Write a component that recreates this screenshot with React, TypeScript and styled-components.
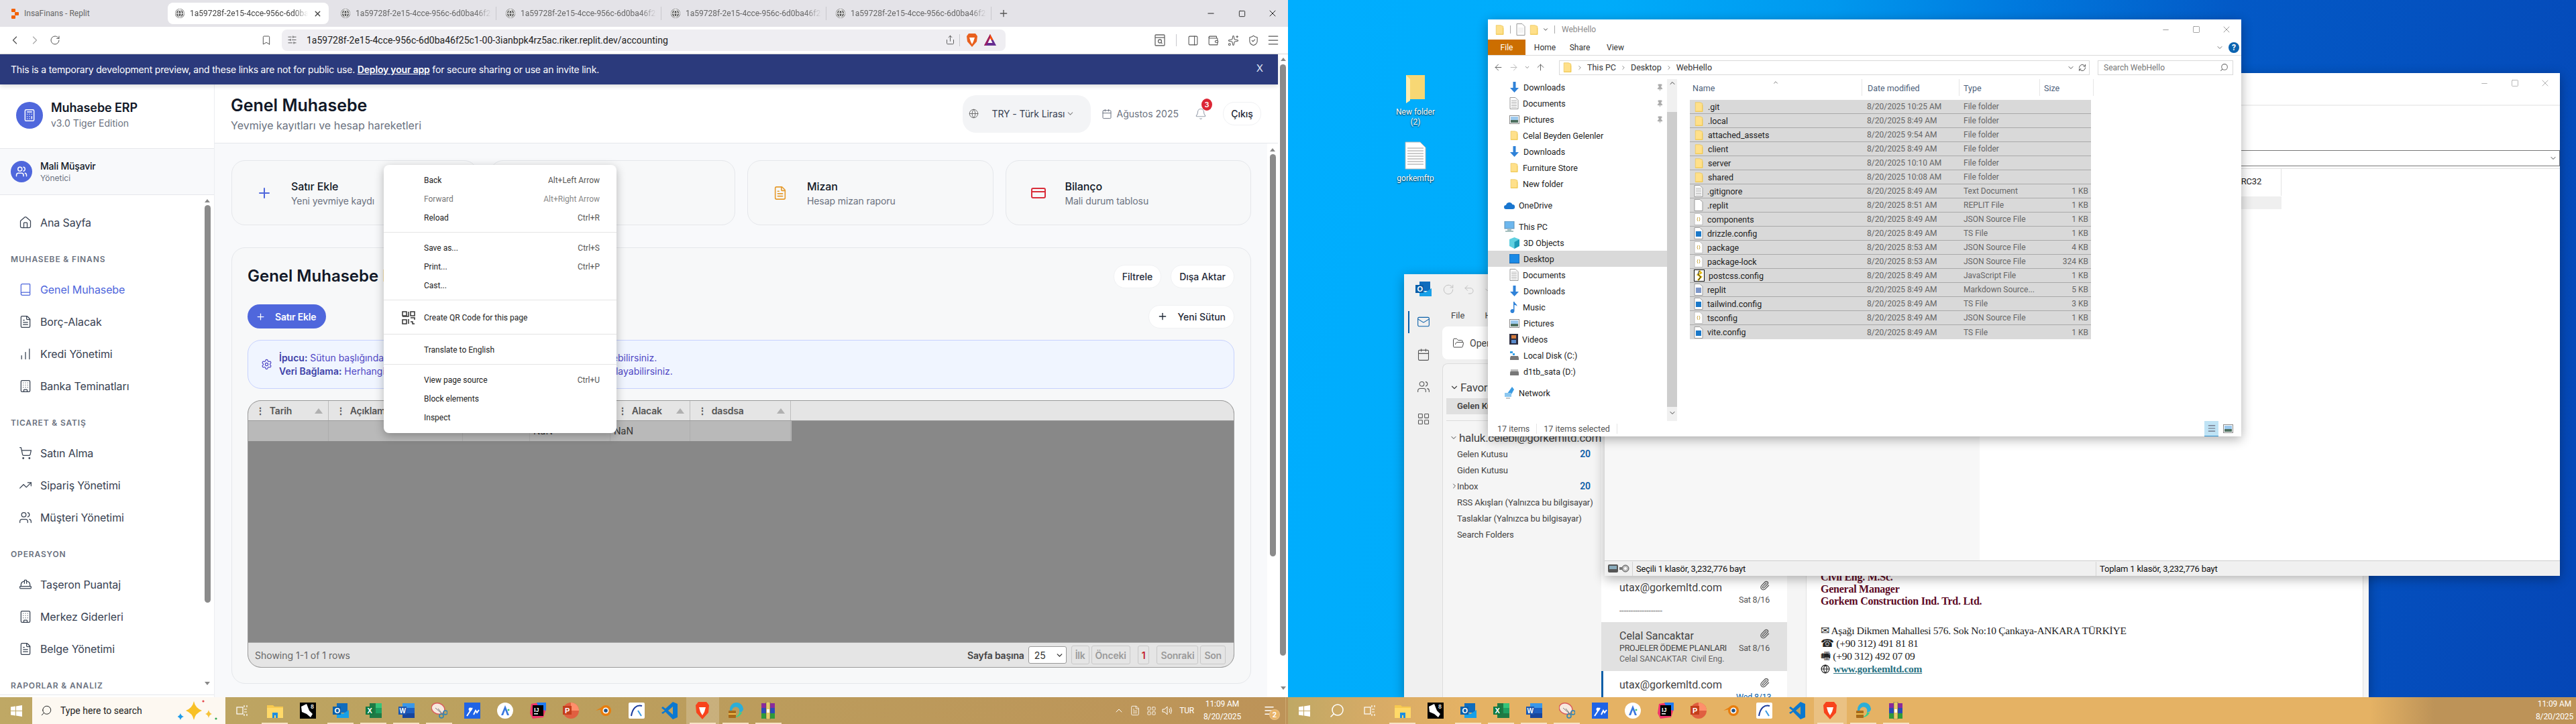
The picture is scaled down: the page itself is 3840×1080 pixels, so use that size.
import React from "react";
import styled, { createGlobalStyle } from "styled-components";
import {
  ArrowLeft, ArrowRight, ArrowUp, Bell, Book, Bookmark, Building, Calculator, Calendar, ChartNoAxesColumnIncreasing,
  ChevronDown, ChevronLeft, ChevronRight, ChevronUp, CreditCard, FileText, FolderOpen, Globe, HardHat, House,
  LayoutGrid, Mail, Menu, Minus, PanelRight, Paperclip, Plus, RefreshCw, RotateCw, Search, Settings, Share,
  ShieldCheck, ShoppingCart, SlidersHorizontal, Sparkles, Square, TrendingUp, Undo2, Users, Wallet, X, Pin,
} from "lucide-react";

const APP = `Inter, "Noto Sans", sans-serif`;
const WIN = `Roboto, "Noto Sans", sans-serif`;
const SERIF = `"Liberation Serif", serif`;

const Global = createGlobalStyle`
  html, body { margin: 0; padding: 0; width: 3840px; height: 1080px; overflow: hidden; background: #000; }
  * { box-sizing: border-box; }
  #root { width: 3840px; height: 1080px; }
`;

const Root = styled.div`display: grid; grid-template-columns: 1920px 1920px; width: 3840px; height: 1080px; overflow: hidden;`;
const Screen = styled.div`display: flex; flex-direction: column; height: 1080px; min-width: 0;`;

/* browser chrome */
const Browser = styled.div`display: flex; flex-direction: column; height: 1040px; background: #fff; overflow: hidden; position: relative;`;
const TabStrip = styled.div`display: flex; height: 40px; background: #e4e3e8; padding: 4px 0 0 4px; align-items: stretch; flex: none;`;
const Tab = styled.div<{ $active?: boolean; $sep?: boolean; $first?: boolean }>`
  width: ${p => (p.$active ? 240 : 246)}px; margin-right: ${p => (p.$active ? 7 : 0)}px; height: 32px; display: flex; align-items: center; gap: 8px;
  padding: 0 10px 0 ${p => (p.$first ? 13 : p.$active ? 11 : 11)}px; border-radius: 8px; background: ${p => (p.$active ? "#fff" : "transparent")};
  font: 12px ${WIN}; color: ${p => (p.$active ? "#444" : "#666")}; position: relative;
  ${p => p.$sep ? "&::after { content: ''; position: absolute; right: 3px; top: 6px; bottom: 6px; width: 1px; background: #c9c8cd; }" : ""}
`;
const TabLabel = styled.span<{ $fade?: boolean }>`
  flex: 1; white-space: nowrap; overflow: hidden; min-width: 0;
  ${p => p.$fade ? "mask-image: linear-gradient(90deg, #000 88%, transparent); -webkit-mask-image: linear-gradient(90deg, #000 88%, transparent);" : ""}
`;
const GlobeDot = styled.span`width: 14px; height: 14px; border-radius: 50%; background: #555; flex: none; display: grid; place-items: center; color: #fff;`;
const NewTab = styled.div`width: 30px; display: grid; place-items: center; color: #555; margin-top: -4px;`;
const WinControls = styled.div`margin-left: auto; display: flex; margin-top: -4px; color: #222;`;
const WinControl = styled.div`width: 46px; height: 40px; display: grid; place-items: center;`;

const Toolbar = styled.div`display: flex; height: 41px; padding: 0 7px; align-items: center; background: #fff; border-bottom: 1px solid #d9d9d9; flex: none;`;
const ToolSlot = styled.div<{ $dim?: boolean; $w?: number }>`width: ${p => p.$w ?? 30}px; height: 30px; display: grid; place-items: center; color: ${p => (p.$dim ? "#aaa" : "#555")}; flex: none;`;
const ToolGap = styled.div`width: 285px; flex: none;`;
const AddressBar = styled.div`width: 1079px; height: 32px; margin-left: 8px; margin-top: -1px; border-radius: 8px; background: #efeef2; display: flex; align-items: center; padding: 0 8px; flex: none;`;
const Url = styled.div`font: 14px ${WIN}; color: #222; margin-left: 14px; flex: 1; white-space: nowrap;`;
const BarSep = styled.div<{ $m?: number }>`width: 1px; height: 18px; background: #c8c8cc; margin: 0 ${p => p.$m ?? 6}px; flex: none;`;
const ToolRight = styled.div`margin-left: auto; display: flex; align-items: center;`;

/* replit page */
const PageRow = styled.div`flex: 1; display: flex; min-height: 0;`;
const Page = styled.div`flex: 1; display: flex; flex-direction: column; min-width: 0;`;
const Banner = styled.div`height: 45px; flex: none; background: #2b3a7c; color: #fff; font: 14px/45px ${APP}; padding: 0 16px; display: flex; justify-content: space-between; box-shadow: 0 3px 6px rgba(0,0,0,.12); position: relative; z-index: 2;`;
const BannerText = styled.div`letter-spacing: -0.18px; b { font-weight: 600; text-decoration: underline; }`;
const BannerClose = styled.div`font-size: 15px; margin-right: -1px; line-height: 41px; color: #dfe3f3; padding-right: 7px;`;
const ScrollTrack = styled.div<{ $w: number; $bg?: string }>`width: ${p => p.$w}px; flex: none; background: ${p => p.$bg || "#fff"}; display: flex; flex-direction: column; align-items: center;`;
const ScrollArrow = styled.div<{ $down?: boolean; $top?: number }>`
  width: 0; height: 0; border-left: 4px solid transparent; border-right: 4px solid transparent; flex: none;
  margin-top: ${p => p.$top ?? 5}px; ${p => (p.$down ? "border-top: 5px solid #888;" : "border-bottom: 5px solid #888;")}
`;
const ScrollThumb = styled.div<{ $h: number; $top: number }>`width: 9px; height: ${p => p.$h}px; margin-top: ${p => p.$top}px; border-radius: 5px; background: #8b8b8b; flex: none;`;

const AppBody = styled.div`flex: 1; display: grid; grid-template-columns: 320px 1fr; min-height: 0;`;
const Sidebar = styled.aside`display: flex; flex-direction: column; background: #fff; border-right: 1px solid #eceef1; font-family: ${APP}; min-height: 0;`;
const Brand = styled.div`height: 96px; flex: none; display: flex; align-items: center; gap: 12px; padding: 0 24px 4px; border-bottom: 1px solid #e5e7eb;`;
const BrandIcon = styled.div`width: 40px; height: 40px; border-radius: 50%; background: #4f67dc; display: grid; place-items: center; color: #fff; flex: none;`;
const BrandName = styled.div`font-size: 18px; line-height: 24px; font-weight: 600; color: #111827; letter-spacing: -0.1px;`;
const BrandSub = styled.div`font-size: 14px; line-height: 22px; color: #6b7280;`;
const UserRow = styled.div`height: 69px; flex: none; background: #f8f9fb; border-bottom: 1px solid #e5e7eb; display: flex; align-items: center; gap: 12px; padding: 0 16px;`;
const Avatar = styled.div`width: 32px; height: 32px; border-radius: 50%; background: #4f67dc; color: #fff; display: grid; place-items: center; flex: none;`;
const UserName = styled.div`font-size: 14px; line-height: 20px; font-weight: 500; color: #111827; letter-spacing: -0.2px;`;
const UserRole = styled.div`font-size: 12px; line-height: 16px; color: #6b7280;`;
const NavWrap = styled.div`flex: 1; display: flex; min-height: 0; overflow: hidden;`;
const Nav = styled.nav`flex: 1; padding: 17px 16px 0; overflow: hidden;`;
const NavLabel = styled.div`font-size: 12px; font-weight: 600; line-height: 22px; color: #6b7280; margin: 20px 0 10px; letter-spacing: 0.85px; white-space: nowrap;`;
const NavItem = styled.div<{ $active?: boolean }>`
  height: 48px; display: flex; align-items: center; gap: 12px; padding-left: 12px; font-size: 16px; letter-spacing: -0.1px;
  color: ${p => (p.$active ? "#4f67dc" : "#374151")};
`;
const SideEnd = styled.div`height: 4px; flex: none; background: #fff; border-top: 1px solid #e5e7eb;`;

const Main = styled.main`display: flex; flex-direction: column; min-width: 0; font-family: ${APP}; background: #f8f9fb;`;
const Header = styled.header`height: 88px; flex: none; background: #fff; border-bottom: 1px solid #e5e7eb; display: flex; align-items: center; padding: 0 25px 0 24px;`;
const HeadTitle = styled.h1`margin: 0; font-size: 25px; line-height: 32px; font-weight: 600; color: #111827;`;
const HeadSub = styled.p`margin: 2px 0 0; font-size: 16px; line-height: 24px; color: #6b7280;`;
const HeadRight = styled.div`margin-left: auto; display: flex; align-items: center;`;
const Currency = styled.div`width: 191px; height: 56px; border-radius: 20px; background: #f3f4f6; display: flex; align-items: center; padding-left: 9px; color: #374151; font-size: 14px; letter-spacing: -0.1px; white-space: nowrap;`;
const CurrencyText = styled.span`margin-left: 20px;`;
const CurrencyCaret = styled.span`margin-left: 2px; color: #888; display: grid;`;
const DateBox = styled.div`display: flex; align-items: center; gap: 7px; margin-left: 16px; font-size: 14px; color: #6b7280; white-space: nowrap;`;
const BellBox = styled.div`position: relative; margin-left: 24px; color: #9ca3af; display: grid; place-items: center; width: 18px;`;
const Badge = styled.span`position: absolute; top: -14px; right: -8px; width: 16px; height: 18px; border-radius: 50%; background: #dc2635; color: #fff; font-size: 11px; font-weight: 600; display: grid; place-items: center;`;
const Logout = styled.div`margin-left: 24px; width: 57px; height: 35px; border-radius: 17px; background: #fff; border: 1px solid #f0f1f3; font-size: 14px; font-weight: 500; color: #1f2937; display: grid; place-items: center;`;

const ContentRow = styled.div`flex: 1; display: flex; min-height: 0;`;
const Content = styled.div`flex: 1; padding: 25px 24px 0 25px; min-width: 0; overflow: hidden;`;
const Cards = styled.div`display: grid; grid-template-columns: repeat(4, 1fr); gap: 18px;`;
const ActionCard = styled.div`height: 97px; border-radius: 20px; background: #f7f8f9; border: 1px solid #e5e7eb; display: flex; align-items: center; padding-left: 36px; gap: 28px;`;
const CardIcon = styled.div<{ $c: string }>`width: 24px; color: ${p => p.$c}; display: grid; place-items: center; flex: none;`;
const CardTitle = styled.div`font-size: 16px; line-height: 24px; font-weight: 500; color: #111827; letter-spacing: -0.1px;`;
const CardSub = styled.div`font-size: 14px; line-height: 20px; color: #6b7280; white-space: nowrap; letter-spacing: -0.1px;`;

const LedgerCard = styled.section`margin-top: 33px; height: 651px; background: #f7f8f9; border: 1px solid #e5e7eb; border-radius: 20px; padding: 24px 24px 0 23px;`;
const LedgerTop = styled.div`display: flex; align-items: center; justify-content: space-between; height: 36px;`;
const LedgerTitle = styled.h2`margin: 0; font-size: 24px; font-weight: 600; line-height: 32px; color: #111827; white-space: nowrap;`;
const BtnRow = styled.div`display: flex; gap: 14px;`;
const Ghost = styled.div`height: 35px; padding: 0 12px; border-radius: 17px; background: #fff; border: 1px solid #f0f1f3; font-size: 14px; font-weight: 500; color: #1f2937; display: flex; align-items: center; gap: 14px; white-space: nowrap;`;
const LedgerActions = styled.div`display: flex; align-items: center; justify-content: space-between; margin-top: 24px; height: 36px;`;
const Primary = styled.div`width: 117px; height: 36px; border-radius: 18px; background: #4f67dc; color: #fff; font-size: 14px; font-weight: 600; display: flex; align-items: center; padding-left: 12px; gap: 14px; letter-spacing: -0.2px;`;
const TipBox = styled.div`margin-top: 17px; height: 73px; border-radius: 20px; background: #f0f5ff; border: 1px solid #c7d2fe; display: flex; align-items: center; padding-left: 19px; gap: 10px; color: #4f46c5; font-size: 14px; line-height: 20px; white-space: nowrap;`;
const TipText = styled.div`b { font-weight: 600; color: #3c3fa8; }`;

const TableBox = styled.div`margin-top: 17px; height: 399px; border: 1px solid #9a9a9a; border-radius: 20px; overflow: hidden; display: flex; flex-direction: column; background: #888;`;
const THead = styled.div`height: 30px; background: #e5e5e5; display: flex; border-bottom: 1px solid #9a9a9a; flex: none;`;
const THCell = styled.div<{ $w: number }>`
  width: ${p => p.$w}px; border-right: 1px solid #bdbdbd; display: flex; align-items: center; padding: 0 8px 0 11px; gap: 7px;
  font-size: 14px; font-weight: 600; color: #555; overflow: hidden; white-space: nowrap; flex: none; letter-spacing: -0.2px;
`;
const Dots = styled.span`font-weight: 700; color: #555;`;
const SortMark = styled.span`margin-left: auto; width: 0; height: 0; border-left: 6px solid transparent; border-right: 6px solid transparent; border-bottom: 8px solid #b0b0b0; flex: none;`;
const TBody = styled.div`flex: 1; background: #888; min-height: 0;`;
const TRow = styled.div`height: 30px; display: flex; background: #b9b9b9; width: 810px;`;
const TCell = styled.div<{ $w: number }>`width: ${p => p.$w}px; border-right: 1px solid #adadad; font-size: 14px; color: #333; padding-left: 5px; line-height: 30px; flex: none;`;
const TFoot = styled.div`height: 37px; flex: none; background: #e5e5e5; border-top: 1px solid #a8a8a8; display: flex; align-items: center; padding: 0 12px 0 10px; font-size: 14px; color: #666;`;
const Pager = styled.div`margin-left: auto; display: flex; align-items: center; gap: 3px;`;
const PagerLabel = styled.span`font-weight: 600; color: #444; margin-right: 3px; letter-spacing: -0.2px;`;
const PageSelect = styled.div`width: 57px; height: 26px; background: #fff; border: 1px solid #999; border-radius: 3px; color: #333; display: flex; align-items: center; justify-content: space-between; padding: 0 3px 0 8px; margin-right: 4px;`;
const PageBtn = styled.div<{ $on?: boolean; $ml?: number }>`
  height: 28px; padding: 0 5px; border: 1px solid #c8c8c8; border-radius: 3px; font-weight: 600; letter-spacing: -0.2px;
  color: ${p => (p.$on ? "#c3202b" : "#9a9a9a")}; display: flex; align-items: center; margin-left: ${p => p.$ml ?? 0}px;
`;

/* context menu */
const ContextMenu = styled.div`
  position: absolute; left: 572px; top: 246px; width: 347px; height: 400px; background: #fff; border-radius: 8px; padding-top: 9px;
  box-shadow: 0 4px 14px rgba(0,0,0,.28); font: 12px/28px ${WIN}; color: #222; z-index: 5;
`;
const MenuItem = styled.div<{ $dim?: boolean; $tall?: boolean }>`
  height: ${p => (p.$tall ? 34 : 28)}px; display: flex; align-items: center; padding: 0 25px 0 60px; position: relative; color: ${p => (p.$dim ? "#777" : "#222")};
  span { margin-left: auto; color: ${p => (p.$dim ? "#888" : "#555")}; }
`;
const MenuRule = styled.div`height: 1px; background: #e4e4e4; margin: 7px 0 9px;`;
const QrSlot = styled.div`position: absolute; left: 27px; top: 7px;`;

/* taskbar */
const Taskbar = styled.div<{ $bg: string }>`height: 40px; flex: none; display: flex; align-items: stretch; background: ${p => p.$bg}; overflow: hidden;`;
const StartBtn = styled.div`width: 48px; display: grid; place-items: center; flex: none;`;
const SearchBox = styled.div`width: 288px; flex: none; background: #fdf8f1; display: flex; align-items: center; padding-left: 12px; gap: 12px; font: 14px ${WIN}; color: #222;`;
const Spark = styled.div`margin-left: auto; display: grid; padding-right: 9px;`;
const Slot = styled.div<{ $active?: boolean; $run?: boolean }>`
  width: 49.06px; flex: none; position: relative; display: grid; place-items: center;
  background: ${p => (p.$active ? "rgba(255,255,255,.2)" : "transparent")};
  ${p => p.$run ? "&::after { content: ''; position: absolute; left: 5px; right: 5px; bottom: 0; height: 2px; background: #f8e3c6; }" : ""}
`;
const Tray = styled.div`margin-left: auto; display: flex; align-items: center; color: #fff; font: 12px ${WIN}; flex: none;`;
const TrayIcon = styled.div`width: 24px; display: grid; place-items: center;`;
const TrayLang = styled.div`margin: 0 12px 0 6px; letter-spacing: -0.2px;`;
const Clock = styled.div<{ $mr?: number }>`text-align: center; line-height: 19px; width: 60px; letter-spacing: -0.1px; margin-right: ${p => p.$mr ?? 0}px;`;
const Notify = styled.div`position: relative; width: 48px; display: grid; place-items: center; height: 40px; margin-left: 16px;`;
const NotifyBadge = styled.span`position: absolute; left: 24px; top: 18px; width: 16px; height: 16px; border-radius: 50%; background: #e9b468; color: #fff; font-size: 11px; display: grid; place-items: center; font-weight: 600; border: 1px solid #fff3;`;
const EdgeLine = styled.div`width: 4px; height: 40px; border-left: 1px solid #cfa971;`;

/* desktop */
const Desktop = styled.div`height: 1040px; position: relative; overflow: hidden; background: linear-gradient(102deg, #00aeff 0%, #00acfa 22%, #0098ee 38%, #007bdf 50%, #0359c6 66%, #0546b6 100%);`;
const DeskIcon = styled.div<{ $x: number; $y: number }>`position: absolute; left: ${p => p.$x}px; top: ${p => p.$y}px; width: 76px; display: flex; flex-direction: column; align-items: center; gap: 6px; color: #fff; font: 12px/15px ${WIN}; text-align: center; text-shadow: 0 1px 2px rgba(0,0,0,.9);`;

const Win = styled.div<{ $x: number; $y: number; $w: number; $h: number; $z: number }>`
  position: absolute; left: ${p => p.$x}px; top: ${p => p.$y}px; width: ${p => p.$w}px; height: ${p => p.$h}px; z-index: ${p => p.$z};
  background: #fff; box-shadow: 0 4px 16px rgba(0,0,0,.32); display: flex; flex-direction: column; overflow: hidden; font: 12px ${WIN}; color: #222;
`;

/* explorer */
const ExTitle = styled.div`height: 30px; flex: none; display: flex; align-items: center; padding-left: 10px; gap: 5px; color: #999;`;
const ExSep = styled.div`width: 1px; height: 12px; background: #aaa; margin: 0 3px;`;
const ExName = styled.div`font-size: 12px; color: #8a8a8a; margin-left: 2px;`;
const ExControls = styled.div`margin-left: auto; display: flex; color: #666; margin-right: 0;`;
const ExControl = styled.div`width: 45px; height: 30px; display: grid; place-items: center;`;
const Ribbon = styled.div`height: 24px; flex: none; display: flex; align-items: stretch; border-bottom: 1px solid #dadada; color: #333;`;
const FileTab = styled.div`width: 56px; background: #cc6e00; color: #fff; display: grid; place-items: center;`;
const RibbonTab = styled.div<{ $w?: number }>`display: grid; place-items: center; width: ${p => p.$w ?? 58}px; font-size: 12px;`;
const RibbonEnd = styled.div`margin-left: auto; display: flex; align-items: center; gap: 7px; padding-right: 3px; color: #777;`;
const Help = styled.div`width: 16px; height: 16px; border-radius: 50%; background: #0a63b0; color: #fff; font-weight: 700; font-size: 12px; display: grid; place-items: center;`;
const AddrRow = styled.div`height: 35px; flex: none; display: flex; align-items: center; padding: 0 12px 0 8px; color: #555;`;
const AddrNav = styled.div`width: 98px; display: flex; align-items: center; gap: 8px; flex: none;`;
const AddrField = styled.div`width: 791px; height: 22px; border: 1px solid #d9d9d9; display: flex; align-items: center; padding-left: 4px; gap: 6px; flex: none; color: #333; font-size: 12.5px;`;
const Crumb = styled.span`color: #777; display: grid; place-items: center;`;
const AddrEnd = styled.div`margin-left: auto; display: flex; align-items: center; color: #555; gap: 5px; padding-right: 4px;`;
const SearchField = styled.div`width: 202px; height: 22px; margin-left: 12px; border: 1px solid #d9d9d9; display: flex; align-items: center; justify-content: space-between; padding: 0 6px 0 8px; color: #777; flex: none;`;
const ExBody = styled.div`flex: 1; display: flex; min-height: 0;`;
const ExNav = styled.div`width: 267px; flex: none; overflow: hidden;`;
const ExNavItem = styled.div<{ $top?: boolean; $sel?: boolean; $gap?: boolean }>`
  height: 24px; display: flex; align-items: center; gap: 6px; padding-left: ${p => (p.$top ? 24 : 32)}px; padding-right: 5px; position: relative;
  background: ${p => (p.$sel ? "#d9d9d9" : "transparent")}; margin-top: ${p => (p.$gap ? 8 : 0)}px; font-size: 12.5px; color: #222; white-space: nowrap;
`;
const PinBox = styled.span`margin-left: auto; color: #aaa; display: grid; place-items: center;`;
const ExTrack = styled.div`width: 15px; height: 510px; flex: none; background: #f0f0f0; display: flex; flex-direction: column; align-items: center; color: #444;`;
const ExThumb = styled.div`width: 15px; height: 440px; background: #cdcdcd; margin-top: 37px; margin-bottom: 3px; flex: none;`;
const ExList = styled.div`flex: 1; padding-left: 19px; min-width: 0;`;
const ListHead = styled.div`height: 25px; display: grid; grid-template-columns: 257px 145px 120px 80px; color: #4c607a; position: relative; margin-bottom: 6px;`;
const ListHCell = styled.div<{ $pl?: number }>`border-right: 1px solid #e5e5e5; padding: 6px 0 0 ${p => p.$pl ?? 4}px; font-size: 12.5px; position: relative; height: 25px;`;
const SortCaret = styled.div`position: absolute; left: 123px; top: 0; color: #666; display: grid;`;
const ListRow = styled.div`height: 21px; width: 598px; display: grid; grid-template-columns: 264px 144px 120px 66px; align-items: center; background: #d9d9d9; border-bottom: 1px solid #a9a9a9; color: #666; font-size: 12px; padding-right: 4px; &:last-child { border-bottom: 0; }`;
const NameCell = styled.div`display: flex; align-items: center; gap: 6px; padding-left: 6px; color: #222; font-size: 12.5px; white-space: nowrap;`;
const SizeCell = styled.div`text-align: right; padding-right: 0;`;
const ExStatus = styled.div`height: 23px; flex: none; display: flex; align-items: center; padding-left: 14px; color: #555; position: relative; font-size: 12.5px;`;
const StatusPart = styled.div`padding-right: 10px; margin-right: 10px; border-right: 1px solid #e5e5e5;`;
const ViewBtns = styled.div`position: absolute; right: 9px; bottom: 0; display: flex; align-items: flex-end; gap: 4px;`;
const ViewBtn = styled.div<{ $on?: boolean }>`width: 21px; height: 23px; background: ${p => (p.$on ? "#bfe3f5" : "transparent")}; border-bottom: ${p => (p.$on ? "1px solid #2a8fd0" : "0")}; display: grid; place-items: center;`;

/* archive window behind */
const ArTitle = styled.div`height: 49px; flex: none; border-bottom: 2px solid #efefef; display: flex; justify-content: flex-end; color: #888; padding-right: 0;`;
const ArSpace = styled.div`height: 66px; flex: none;`;
const ArCombo = styled.div`height: 24px; flex: none; border: 1px solid #777; display: flex; align-items: center; justify-content: flex-end; padding-right: 3px; color: #444;`;
const ArBody = styled.div`flex: 1; display: flex; min-height: 0; margin-top: 3px; border-top: 1px solid #e0e0e0;`;
const ArLeft = styled.div`width: 559px; background: #f7f7f7; flex: none;`;
const ArRight = styled.div`flex: 1; min-width: 0;`;
const ArHead = styled.div`height: 40px; width: 450px; border-right: 1px solid #e3e3e3; text-align: right; padding: 11px 29px 0 0; font-size: 13px; color: #222; letter-spacing: -0.2px;`;
const ArRow = styled.div`height: 19px; margin-top: 1px; width: 450px; background: #efefef;`;
const ArStatus = styled.div`height: 23px; flex: none; background: #f0f0f0; border-top: 1px solid #cfcfcf; display: flex; align-items: center; font-size: 13px; letter-spacing: -0.2px; color: #111; position: relative;`;
const ArStat = styled.div<{ $w: number }>`width: ${p => p.$w}px; flex: none; padding-left: 5px; height: 21px; line-height: 21px; border-left: 1px solid #d4d4d4; white-space: nowrap;`;
const ArIcons = styled.div`width: 41px; flex: none; display: flex; gap: 2px; padding-left: 5px; align-items: center;`;

/* outlook behind */
const OlRail = styled.div`width: 57px; flex: none; background: #f0f0f0; display: flex; flex-direction: column; align-items: center; color: #555; position: relative;`;
const RailBtn = styled.div<{ $on?: boolean; $h: number; $mt?: number }>`height: ${p => p.$h}px; margin-top: ${p => p.$mt ?? 0}px; display: grid; place-items: center; flex: none; color: ${p => (p.$on ? "#0a5fa8" : "#555")};`;
const RailBar = styled.div`position: absolute; left: 6px; top: 55px; width: 2px; height: 33px; background: #0a5fa8;`;
const OlMenu = styled.div`position: absolute; left: 70px; top: 54px; display: flex; gap: 30px; font-size: 13px; color: #444;`;
const OlTools = styled.div`position: absolute; left: 57px; top: 10px; display: flex; gap: 13px; color: #bbb; align-items: center; height: 26px;`;
const OlOpen = styled.div`position: absolute; left: 57px; top: 78px; width: 180px; height: 49px; background: #fff; border-radius: 8px; display: flex; align-items: center; padding-left: 15px; gap: 8px; font-size: 14px; color: #444;`;
const OlMain = styled.div`flex: 1; display: flex; min-height: 0;`;
const OlWrap = styled.div`flex: 1; display: flex; flex-direction: column; min-width: 0; background: #f0f0f0; position: relative;`;
const OlPanes = styled.div`flex: 1; display: flex; padding-top: 133px; min-height: 0;`;
const OlFolders = styled.div`width: 237px; flex: none; background: #f5f5f5; border-left: 1px solid #ddd; border-top: 1px solid #ddd; border-radius: 8px 0 0 0; padding: 23px 0 0 5px; font-size: 13px; color: #444; position: relative;`;
const FolderHead = styled.div<{ $mt?: number }>`height: 24px; display: flex; align-items: center; gap: 2px; padding-left: 5px; margin-top: ${p => p.$mt ?? 0}px; font-size: 17px; color: #444; white-space: nowrap; letter-spacing: -0.3px;`;
const FolderSel = styled.div`height: 24px; margin: 4px 0 0; background: #e0e0e0; font-weight: 600; line-height: 24px; padding-left: 16px;`;
const FolderRule = styled.div`height: 1px; background: #dcdcdc; margin: 9px 0 0 0;`;
const FolderItem = styled.div`height: 24px; display: flex; align-items: center; padding: 0 16px 0 16px; position: relative; white-space: nowrap; letter-spacing: -0.1px;`;
const FolderCount = styled.b`margin-left: auto; color: #0f5da8; font-weight: 600; font-size: 14px;`;
const FolderCaret = styled.span`position: absolute; left: 6px; display: grid; color: #555;`;
const MailPane = styled.div`width: 277px; flex: none; background: #fff; padding-top: 314px; font-size: 12px; overflow: hidden;`;
const MailRow = styled.div<{ $sel?: boolean; $bar?: boolean; $h: number }>`
  height: ${p => p.$h}px; position: relative; background: ${p => (p.$sel ? "#e1e1e1" : "#fff")};
  ${p => (p.$bar ? "border-left: 3px solid #0a5fa8;" : "")}
  display: grid; grid-template-columns: 1fr 50px; grid-auto-rows: min-content; padding: 0 26px 0 ${p => (p.$bar ? 24 : 27)}px; align-content: start; color: #555;
`;
const MailFrom = styled.div`font-size: 16px; line-height: 20px; color: #444; white-space: nowrap; margin-top: 11px;`;
const MailClip = styled.div`display: grid; justify-items: end; margin-top: 10px; color: #555;`;
const MailSubj = styled.div`font-size: 12.5px; line-height: 16px; color: #444; white-space: nowrap; letter-spacing: -0.25px;`;
const MailDate = styled.div<{ $blue?: boolean }>`font-size: 12.5px; line-height: 16px; color: ${p => (p.$blue ? "#0a5fa8" : "#555")}; white-space: nowrap; text-align: right; letter-spacing: -0.2px;`;
const MailPrev = styled.div`grid-column: 1 / 3; font-size: 12.5px; line-height: 16px; color: #666; white-space: nowrap; letter-spacing: -0.1px;`;
const OlGap = styled.div`width: 29px; flex: none; background: #f5f5f5; border-right: 1px solid #e3e3e3;`;
const Reading = styled.div`flex: 1; background: #fff; padding: 310px 0 0 21px; font-family: ${SERIF}; position: relative; min-width: 0; white-space: nowrap;`;
const SigBold = styled.div`font-size: 16px; font-weight: 700; line-height: 18px; color: #5c0a25; letter-spacing: -0.25px;`;
const SigLine = styled.div<{ $top?: number }>`font-size: 15.5px; line-height: 19px; color: #222; letter-spacing: -0.28px; margin-top: ${p => p.$top ?? 0}px; display: flex; align-items: center; gap: 5px;`;
const SigLink = styled.span`color: #2a7283; font-weight: 700; text-decoration: underline;`;
const OlEdge = styled.div`width: 9px; flex: none; background: #f5f5f5; border-left: 1px solid #e0e0e0;`;

/* small drawings */
const FolderIco = ({ s = 14 }: { s?: number }) => (
  <svg width={s} height={s} viewBox="0 0 16 20" style={{ flex: "none" }}>
    <path d="M1 1h9l5 2v16H1z" fill="#ffe08a" stroke="#e8c45a" strokeWidth="1" />
    <path d="M1 19h14V6" fill="none" stroke="#f2c94c" strokeWidth="1.5" />
  </svg>
);
const DocIco = ({ lines = true, tag }: { lines?: boolean; tag?: string }) => (
  <svg width="14" height="18" viewBox="0 0 14 18" style={{ flex: "none" }}>
    <path d="M1 .5h8l4 4v13H1z" fill="#fff" stroke="#999" />
    {lines && [5, 7.5, 10, 12.5, 15].map(y => <path key={y} d={`M3 ${y}h8`} stroke="#999" strokeWidth=".8" />)}
    {tag && <rect x="3" y="6" width="8" height="8" fill={tag} />}
  </svg>
);
const NavIco = ({ k }: { k: string }) => {
  if (k === "folder") return <FolderIco s={14} />;
  if (k === "down") return <svg width="15" height="16" viewBox="0 0 15 16" style={{ flex: "none" }}><path d="M5.5 0h4v9H14l-6.5 7L1 9h4.500z" fill="#2f82d8" /></svg>;
  if (k === "doc") return <DocIco />;
  if (k === "pic") return <svg width="15" height="13" viewBox="0 0 15 13" style={{ flex: "none" }}><rect x=".5" y=".5" width="14" height="12" fill="#fff" stroke="#888" /><rect x="2" y="2" width="11" height="5" fill="#9cc9ee" /><rect x="2" y="7" width="11" height="4" fill="#4d6f5f" /></svg>;
  if (k === "cloud") return <svg width="16" height="11" viewBox="0 0 16 11" style={{ flex: "none" }}><path d="M3 11a3 3 0 0 1 0-6 5 5 0 0 1 9.500-1A3.500 3.500 0 0 1 13 11z" fill="#1976cf" /></svg>;
  if (k === "pc") return <svg width="16" height="16" viewBox="0 0 16 16" style={{ flex: "none" }}><rect x="1" y="0" width="14" height="11" fill="#6db7ee" stroke="#5d8fb4" /><path d="M5 13h6M2 15h12" stroke="#8aa" strokeWidth="1.500" /></svg>;
  if (k === "3d") return <svg width="15" height="17" viewBox="0 0 15 17" style={{ flex: "none" }}><path d="M7.500 0L15 3v10l-7.500 4L0 13V3z" fill="#5ed0e0" /><path d="M7.500 7L15 3v10l-7.500 4z" fill="#1c9bb8" /></svg>;
  if (k === "desk") return <svg width="15" height="15" viewBox="0 0 15 15" style={{ flex: "none" }}><rect width="15" height="13.500" fill="#1a8ae6" stroke="#1a5c9c" /></svg>;
  if (k === "music") return <svg width="14" height="17" viewBox="0 0 14 17" style={{ flex: "none" }}><path d="M6 0h1.500c.5 3 4 3 4 7-1-1.500-2.500-2-4-2v9a3 3 0 1 1-1.500-2.500z" fill="#2f82d8" /></svg>;
  if (k === "video") return <svg width="13" height="16" viewBox="0 0 13 16" style={{ flex: "none" }}><rect width="13" height="16" fill="#2d2d40" /><rect x="3" y="2" width="7" height="5" fill="#d27a3c" /><rect x="3" y="9" width="7" height="5" fill="#5a8ccc" /></svg>;
  if (k === "disk") return <svg width="15" height="15" viewBox="0 0 15 15" style={{ flex: "none" }}><path d="M2 8h11l1 3v3H1v-3z" fill="#777" /><rect x="1" y="1" width="4" height="3" fill="#35a0e8" /><rect x="5" y="4" width="3" height="3" fill="#35a0e8" /></svg>;
  if (k === "disk2") return <svg width="15" height="15" viewBox="0 0 15 15" style={{ flex: "none" }}><path d="M2 6h11l1 3v4H1V9z" fill="#777" /><rect x="2" y="4" width="11" height="3" fill="#bbb" /></svg>;
  return <svg width="16" height="18" viewBox="0 0 16 18" style={{ flex: "none" }}><path d="M5 10L12 0l3 4-5 9z" fill="#3a9be2" /><rect x="1" y="9" width="10" height="6" fill="#8cc7ef" /><path d="M3 17h6" stroke="#888" /></svg>;
};
const RowIco = ({ k }: { k: string }) => {
  if (k === "f") return <FolderIco s={15} />;
  if (k === "txt") return <DocIco />;
  if (k === "blank") return <DocIco lines={false} />;
  if (k === "json") return <svg width="14" height="18" viewBox="0 0 14 18" style={{ flex: "none" }}><path d="M1 .5h8l4 4v13H1z" fill="#fff" stroke="#bbb" /><path d="M6 6q-2 3 0 6M8 6q2 3 0 6" stroke="#caa94a" fill="none" /></svg>;
  if (k === "ts") return <DocIco lines={false} tag="#1a78c8" />;
  if (k === "js") return <svg width="16" height="18" viewBox="0 0 16 18" style={{ flex: "none" }}><rect x=".5" y=".5" width="15" height="17" fill="#fff" stroke="#111" /><path d="M8 2l3 3-5 3 5 3-5 5" fill="none" stroke="#e2bc18" strokeWidth="2.500" /><path d="M8 2l-2 5 4 4-3 5" fill="none" stroke="#111" /></svg>;
  return <DocIco lines={false} tag="#7d96c8" />;
};

const WinLogo = () => (
  <svg width="17" height="17" viewBox="0 0 17 17"><path d="M0 2.500L7 1.500v6.500H0zM8 1.400L17 0v8H8zM0 9h7v6.500L0 14.500zM8 9h9v8l-9-1.400z" fill="#fff" /></svg>
);
const TaskView = () => (
  <svg width="18" height="18" viewBox="0 0 18 18" fill="none" stroke="#fff" strokeWidth="1.200"><rect x="1" y="4" width="9" height="10" /><path d="M12 1v3M16 1v3M12 14v3M16 14v3M12 7h4M12 11h4" /></svg>
);
const SearchStars = () => (
  <svg width="62" height="40" viewBox="0 0 62 40">
    <path d="M24 6q2 10 12 14q-10 4-12 14q-2-10-12-14q10-4 12-14z" fill="#f8c026" />
    <path d="M4 24q1 4 5 5q-4 1-5 5q-1-4-5-5q4-1 5-5z" fill="#1e9bea" />
    <path d="M46 19q1 5 5 6q-4 1-5 6q-1-5-5-6q4-1 5-6z" fill="#f5c23a" />
    <circle cx="38" cy="6" r="1.600" fill="#e5484d" />
    <circle cx="57" cy="32" r="1.600" fill="#35a853" />
  </svg>
);
const Tile = ({ children, bg, r = 0, s = 24 }: { children?: React.ReactNode; bg: string; r?: number; s?: number }) => (
  <svg width={s} height={s} viewBox="0 0 24 24"><rect width="24" height="24" fill={bg} rx={r} />{children}</svg>
);
const AppIcon = ({ k }: { k: string }) => {
  const letter = (x: number, y: number, t: string, fs = 13, c = "#fff") => <text x={x} y={y} fontSize={fs} fontWeight="700" fill={c} fontFamily="Liberation Sans">{t}</text>;
  switch (k) {
    case "files":
      return <svg width="24" height="22" viewBox="0 0 24 22"><path d="M0 3h9l2 2h13v17H0z" fill="#f7c94f" /><rect y="7" width="24" height="15" fill="#ffd968" /><path d="M8 22v-8h8v8h-3v-4h-2v4z" fill="#1f8fe0" /></svg>;
    case "rhino":
      return <Tile bg="#000"><path d="M2 6l8-4 4 10 5 5-3 5-6-5-7-3z" fill="#fff" />{letter(16, 9, "8", 9, "#ddd")}</Tile>;
    case "outlook":
      return <svg width="24" height="22" viewBox="0 0 24 22"><rect x="6" y="0" width="16" height="14" fill="#0f6cbd" /><path d="M6 11l9 5 9-6v12H6z" fill="#18a0e8" /><rect x="0" y="5" width="12" height="12" fill="#0a5ea8" />{letter(2.500, 15, "O", 11)}</svg>;
    case "excel":
      return <svg width="24" height="22" viewBox="0 0 24 22"><rect x="6" width="18" height="22" fill="#1f7a45" /><rect x="15" width="9" height="7" fill="#36c47a" /><rect x="15" y="7" width="9" height="8" fill="#1fa161" /><rect y="5" width="12" height="12" fill="#107a41" />{letter(2.500, 15, "X", 11)}</svg>;
    case "word":
      return <svg width="24" height="22" viewBox="0 0 24 22"><rect x="6" width="18" height="22" fill="#1e5fc0" /><rect x="6" width="18" height="7" fill="#3a97e8" /><rect x="6" y="15" width="18" height="7" fill="#17459c" /><rect y="5" width="12" height="12" fill="#1a55b0" />{letter(1.500, 15, "W", 10)}</svg>;
    case "snip":
      return <svg width="24" height="24" viewBox="0 0 24 24"><ellipse cx="10" cy="9" rx="10" ry="8" transform="rotate(20 10 9)" fill="#f7e9df" stroke="#d95c5c" strokeWidth="1.500" /><path d="M10 9l5 6M6 8l9 8" stroke="#777" /><circle cx="15" cy="20" r="3" fill="none" stroke="#2a83b8" strokeWidth="1.500" /><circle cx="21" cy="15" r="3" fill="none" stroke="#2a83b8" strokeWidth="1.500" /></svg>;
    case "bluet":
      return <Tile bg="#1f63e6"><path d="M4 20L12 8M14 18l3-6 2 3 3-4" stroke="#fff" strokeWidth="2" fill="none" /><circle cx="9" cy="10" r="2.500" fill="#fff" /></Tile>;
    case "android":
      return <svg width="24" height="24" viewBox="0 0 24 24"><circle cx="12" cy="12" r="12" fill="#fff" /><path d="M12 4l6 15h-3l-3-8-3 8H6z" fill="#3a78de" /><circle cx="17" cy="11" r="1.500" fill="#3ac47a" /></svg>;
    case "idea":
      return <svg width="24" height="24" viewBox="0 0 24 24"><path d="M2 2l6-1 12-1 4 10-4 12-16 2-4-8z" fill="#f0356b" /><path d="M10 0h14v12L14 10z" fill="#1f7bf2" /><rect x="4" y="4" width="16" height="16" fill="#000" />{letter(6, 14, "IJ", 9)}<rect x="6" y="16" width="6" height="1.500" fill="#fff" /></svg>;
    case "ppt":
      return <svg width="24" height="24" viewBox="0 0 24 24"><path d="M12 0a12 12 0 1 1 0 24 12 12 0 0 1 0-24z" fill="#e05f40" /><path d="M12 0a12 12 0 0 1 12 12H12z" fill="#ff8f6b" /><rect y="5" width="13" height="13" fill="#c43e1c" />{letter(3, 15.500, "P", 11)}</svg>;
    case "blender":
      return <svg width="24" height="22" viewBox="0 0 24 22"><circle cx="15" cy="11" r="8" fill="#e87d0d" /><circle cx="15" cy="11" r="4.500" fill="#fff" /><circle cx="15" cy="11" r="2.800" fill="#27527f" /><path d="M0 11l9-5v3z" fill="#e87d0d" /></svg>;
    case "arc":
      return <svg width="24" height="24" viewBox="0 0 24 24"><rect width="24" height="24" rx="2" fill="#fff" /><path d="M4 20C6 8 12 3 20 5" stroke="#1a3a9c" strokeWidth="2" fill="none" /><path d="M14 12l5 8" stroke="#3a9be2" strokeWidth="2" /></svg>;
    case "vscode":
      return <svg width="24" height="26" viewBox="0 0 24 26"><path d="M17 0l7 3v20l-7 3L6 15l-4 3-2-2 5-3-5-4 2-2 4 3z" fill="#0a78d0" /><path d="M17 7L10 13l7 6z" fill="#bfa25f" /></svg>;
    case "brave":
      return <svg width="22" height="26" viewBox="0 0 22 26"><path d="M5 0h12l4 5-1 11-9 10-9-10L1 5z" fill="#f8431c" /><path d="M6 8h10l-2 7-3 5-3-5z" fill="#fff" /></svg>;
    case "edgeb":
      return <svg width="24" height="26" viewBox="0 0 24 26"><path d="M4 12A10 10 0 0 1 24 10c0 4-3 6-6 5 2-6-5-10-9-6-3 3-2 8 0 9-4 0-5-3-5-6z" fill="#2caed8" /><path d="M18 15c3 2 4 0 4 1-2 5-8 8-13 7 6-1 9-4 9-8z" fill="#3ad08a" /><rect x="2" y="13" width="11" height="11" rx="1" fill="#a86a1a" /><rect x="2" y="17" width="11" height="2" fill="#f2c14e" /></svg>;
    case "rar":
      return <svg width="24" height="26" viewBox="0 0 24 26"><rect x="2" y="2" width="20" height="7" fill="#8a2a9c" /><rect x="2" y="9" width="20" height="8" fill="#2a4ab8" /><rect x="2" y="17" width="20" height="8" fill="#2f9a3a" /><rect x="9" width="6" height="26" fill="#e8cc6a" stroke="#444" strokeWidth=".500" /><rect x="10" y="11" width="4" height="5" fill="#fff" /></svg>;
    default:
      return null;
  }
};
const BraveLion = ({ s = 16 }: { s?: number }) => (
  <svg width={s} height={s * 1.25} viewBox="0 0 16 20"><path d="M3 0h10l3 4-1 8-7 8-7-8-1-8z" fill="#e8601f" /><path d="M4 6h8l-2 6-2 4-2-4z" fill="#fff" /></svg>
);
const Bat = () => (
  <svg width="18" height="17" viewBox="0 0 18 17"><path d="M9 0l9 17H0z" fill="#662d91" /><path d="M9 0l4.500 8.500H4.500z" fill="#ff5000" /><path d="M9 6l3.500 7h-7z" fill="#fff" /><path d="M9 0L0 17h3l6-12z" fill="#9e1f63" /></svg>
);
const ReplitLogo = () => (
  <svg width="11" height="15" viewBox="0 0 11 15"><rect x="0" y="0" width="6" height="5" rx="1" fill="#f26207" /><rect x="5" y="5" width="6" height="5" rx="1" fill="#f26207" /><rect x="0" y="10" width="6" height="5" rx="1" fill="#f26207" /></svg>
);
const QrIcon = () => (
  <svg width="20" height="20" viewBox="0 0 20 20" fill="none" stroke="#333" strokeWidth="1.500"><rect x="1" y="1" width="6" height="6" /><rect x="13" y="1" width="6" height="6" /><rect x="1" y="13" width="6" height="6" /><path d="M10 1v7H1M10 12v7M13 10h6v3M13 16h3v3h3" /></svg>
);
const ReaderIco = () => (
  <svg width="18" height="18" viewBox="0 0 18 18" fill="none" stroke="#666" strokeWidth="1.300"><rect x="2" y="1" width="14" height="16" rx="1" /><path d="M2 5h14" /><circle cx="9" cy="10.500" r="2.500" /><path d="M11 12.500l1.500 1.500" /></svg>
);
const BigDoc = () => (
  <svg width="32" height="42" viewBox="0 0 32 42"><path d="M1 1h22l8 8v32H1z" fill="#fff" stroke="#bbb" />{[10, 14, 18, 22, 26, 30, 34].map(y => <path key={y} d={`M4 ${y}h24`} stroke="#999" />)}</svg>
);
const BigFolder = () => (
  <svg width="30" height="42" viewBox="0 0 30 42"><path d="M1 0h28v36H5l-4 6z" fill="#f7d774" /><path d="M1 0l6 6v32l-6 4z" fill="#ffeeb0" /></svg>
);
const SpeakerIco = () => (
  <svg width="16" height="14" viewBox="0 0 16 14" fill="none" stroke="#fff"><path d="M1 5h3l4-4v12l-4-4H1zM11 4q2 3 0 6M13 2q3 5 0 10" /></svg>
);

/* data */
type Nv = { label?: string; icon?: React.ReactNode; text?: string; active?: boolean };
const navData: Nv[] = [
  { icon: <House size={20} strokeWidth={1.5} />, text: "Ana Sayfa" },
  { label: "MUHASEBE & FINANS" },
  { icon: <Book size={20} strokeWidth={1.5} />, text: "Genel Muhasebe", active: true },
  { icon: <FileText size={20} strokeWidth={1.5} />, text: "Borç-Alacak" },
  { icon: <ChartNoAxesColumnIncreasing size={20} strokeWidth={1.5} />, text: "Kredi Yönetimi" },
  { icon: <Building size={20} strokeWidth={1.5} />, text: "Banka Teminatları" },
  { label: "TICARET & SATIŞ" },
  { icon: <ShoppingCart size={20} strokeWidth={1.5} />, text: "Satın Alma" },
  { icon: <TrendingUp size={20} strokeWidth={1.5} />, text: "Sipariş Yönetimi" },
  { icon: <Users size={20} strokeWidth={1.5} />, text: "Müşteri Yönetimi" },
  { label: "OPERASYON" },
  { icon: <HardHat size={20} strokeWidth={1.5} />, text: "Taşeron Puantaj" },
  { icon: <Building size={20} strokeWidth={1.5} />, text: "Merkez Giderleri" },
  { icon: <FileText size={20} strokeWidth={1.5} />, text: "Belge Yönetimi" },
  { label: "RAPORLAR & ANALIZ" },
];

const menu: (null | { t: string; s?: string; dim?: boolean; qr?: boolean })[] = [
  { t: "Back", s: "Alt+Left Arrow" }, { t: "Forward", s: "Alt+Right Arrow", dim: true }, { t: "Reload", s: "Ctrl+R" }, null,
  { t: "Save as...", s: "Ctrl+S" }, { t: "Print...", s: "Ctrl+P" }, { t: "Cast..." }, null,
  { t: "Create QR Code for this page", qr: true }, null,
  { t: "Translate to English" }, null,
  { t: "View page source", s: "Ctrl+U" }, { t: "Block elements" }, { t: "Inspect" },
];

const leftTasks = ["files", "rhino", "outlook", "excel", "word", "snip", "bluet", "android", "idea", "ppt", "blender", "arc", "vscode", "brave", "edgeb", "rar"];
const runningTasks = new Set(["files", "outlook", "excel", "word", "snip", "brave", "edgeb", "rar"]);

const explorerNav: { t: string; k: string; top?: boolean; pin?: boolean; sel?: boolean; gap?: boolean }[] = [
  { t: "Downloads", k: "down", pin: true }, { t: "Documents", k: "doc", pin: true }, { t: "Pictures", k: "pic", pin: true },
  { t: "Celal Beyden Gelenler", k: "folder" }, { t: "Downloads", k: "down" }, { t: "Furniture Store", k: "folder" }, { t: "New folder", k: "folder" },
  { t: "OneDrive", k: "cloud", top: true, gap: true }, { t: "This PC", k: "pc", top: true, gap: true },
  { t: "3D Objects", k: "3d" }, { t: "Desktop", k: "desk", sel: true }, { t: "Documents", k: "doc" }, { t: "Downloads", k: "down" },
  { t: "Music", k: "music" }, { t: "Pictures", k: "pic" }, { t: "Videos", k: "video" }, { t: "Local Disk (C:)", k: "disk" }, { t: "d1tb_sata (D:)", k: "disk2" },
  { t: "Network", k: "net", top: true, gap: true },
];
const files: [string, string, string, string, string][] = [
  [".git", "f", "8/20/2025 10:25 AM", "File folder", ""],
  [".local", "f", "8/20/2025 8:49 AM", "File folder", ""],
  ["attached_assets", "f", "8/20/2025 9:54 AM", "File folder", ""],
  ["client", "f", "8/20/2025 8:49 AM", "File folder", ""],
  ["server", "f", "8/20/2025 10:10 AM", "File folder", ""],
  ["shared", "f", "8/20/2025 10:08 AM", "File folder", ""],
  [".gitignore", "txt", "8/20/2025 8:49 AM", "Text Document", "1 KB"],
  [".replit", "blank", "8/20/2025 8:51 AM", "REPLIT File", "1 KB"],
  ["components", "json", "8/20/2025 8:49 AM", "JSON Source File", "1 KB"],
  ["drizzle.config", "ts", "8/20/2025 8:49 AM", "TS File", "1 KB"],
  ["package", "json", "8/20/2025 8:53 AM", "JSON Source File", "4 KB"],
  ["package-lock", "json", "8/20/2025 8:53 AM", "JSON Source File", "324 KB"],
  ["postcss.config", "js", "8/20/2025 8:49 AM", "JavaScript File", "1 KB"],
  ["replit", "md", "8/20/2025 8:49 AM", "Markdown Source...", "5 KB"],
  ["tailwind.config", "ts", "8/20/2025 8:49 AM", "TS File", "3 KB"],
  ["tsconfig", "json", "8/20/2025 8:49 AM", "JSON Source File", "1 KB"],
  ["vite.config", "ts", "8/20/2025 8:49 AM", "TS File", "1 KB"],
];

const columns: [string, number, boolean][] = [["Tarih", 120, true], ["Açıklama", 200, false], ["", 100, false], ["", 120, false], ["Alacak", 119, true], ["dasdsa", 150, true]];
const TAB_TITLE = "1a59728f-2e15-4cce-956c-6d0ba46f25c1";
const TabGlobe = () => <GlobeDot><Globe size={14} strokeWidth={2} /></GlobeDot>;

const LeftScreen = () => (
  <Screen>
    <Browser>
      <TabStrip>
        <Tab $first><ReplitLogo /><TabLabel>InsaFinans - Replit</TabLabel></Tab>
        <Tab $active><TabGlobe /><TabLabel $fade>{TAB_TITLE}</TabLabel><X size={13} strokeWidth={2.5} color="#444" /></Tab>
        <Tab $sep><TabGlobe /><TabLabel $fade>{TAB_TITLE}</TabLabel></Tab>
        <Tab $sep><TabGlobe /><TabLabel $fade>{TAB_TITLE}</TabLabel></Tab>
        <Tab $sep><TabGlobe /><TabLabel $fade>{TAB_TITLE}</TabLabel></Tab>
        <Tab $sep><TabGlobe /><TabLabel $fade>{TAB_TITLE}</TabLabel></Tab>
        <NewTab><Plus size={16} strokeWidth={2} /></NewTab>
        <WinControls>
          <WinControl><Minus size={14} /></WinControl>
          <WinControl><Square size={11} /></WinControl>
          <WinControl><X size={16} strokeWidth={1.5} /></WinControl>
        </WinControls>
      </TabStrip>
      <Toolbar>
        <ToolSlot><ChevronLeft size={20} strokeWidth={1.5} /></ToolSlot>
        <ToolSlot $dim><ChevronRight size={20} strokeWidth={1.5} /></ToolSlot>
        <ToolSlot><RotateCw size={16} strokeWidth={1.5} /></ToolSlot>
        <ToolGap />
        <ToolSlot><Bookmark size={16} strokeWidth={1.5} /></ToolSlot>
        <AddressBar>
          <SlidersHorizontal size={15} strokeWidth={1.5} color="#555" />
          <Url>1a59728f-2e15-4cce-956c-6d0ba46f25c1-00-3ianbpk4rz5ac.riker.replit.dev/accounting</Url>
          <Share size={15} strokeWidth={1.5} color="#555" />
          <BarSep />
          <ToolSlot $w={24}><BraveLion /></ToolSlot>
          <ToolSlot><Bat /></ToolSlot>
        </AddressBar>
        <ToolRight>
          <ToolSlot><ReaderIco /></ToolSlot>
          <BarSep $m={9} />
          <ToolSlot><PanelRight size={17} strokeWidth={1.5} /></ToolSlot>
          <ToolSlot><Wallet size={17} strokeWidth={1.5} /></ToolSlot>
          <ToolSlot><Sparkles size={17} strokeWidth={1.5} /></ToolSlot>
          <ToolSlot><ShieldCheck size={17} strokeWidth={1.5} /></ToolSlot>
          <ToolSlot><Menu size={20} strokeWidth={1.5} /></ToolSlot>
        </ToolRight>
      </Toolbar>
      <PageRow>
        <Page>
          <Banner>
            <BannerText>This is a temporary development preview, and these links are not for public use. <b>Deploy your app</b> for secure sharing or use an invite link.</BannerText>
            <BannerClose>X</BannerClose>
          </Banner>
          <AppBody>
            <Sidebar>
              <Brand>
                <BrandIcon><Calculator size={20} strokeWidth={1.75} /></BrandIcon>
                <div><BrandName>Muhasebe ERP</BrandName><BrandSub>v3.0 Tiger Edition</BrandSub></div>
              </Brand>
              <UserRow>
                <Avatar><Users size={18} strokeWidth={2} /></Avatar>
                <div><UserName>Mali Müşavir</UserName><UserRole>Yönetici</UserRole></div>
              </UserRow>
              <NavWrap>
                <Nav>
                  {navData.map((n, i) => n.label
                    ? <NavLabel key={i}>{n.label}</NavLabel>
                    : <NavItem key={i} $active={n.active}>{n.icon}{n.text}</NavItem>)}
                </Nav>
                <ScrollTrack $w={20}>
                  <ScrollArrow $top={6} />
                  <ScrollThumb $top={4} $h={593} />
                  <ScrollArrow $down $top={118} />
                </ScrollTrack>
              </NavWrap>
              <SideEnd />
            </Sidebar>
            <Main>
              <Header>
                <div><HeadTitle>Genel Muhasebe</HeadTitle><HeadSub>Yevmiye kayıtları ve hesap hareketleri</HeadSub></div>
                <HeadRight>
                  <Currency>
                    <Globe size={15} strokeWidth={1.5} color="#666" />
                    <CurrencyText>TRY - Türk Lirası</CurrencyText>
                    <CurrencyCaret><ChevronDown size={13} /></CurrencyCaret>
                  </Currency>
                  <DateBox><Calendar size={16} strokeWidth={1.5} />Ağustos 2025</DateBox>
                  <BellBox><Bell size={18} strokeWidth={1.5} /><Badge>3</Badge></BellBox>
                  <Logout>Çıkış</Logout>
                </HeadRight>
              </Header>
              <ContentRow>
                <Content>
                  <Cards>
                    <ActionCard><CardIcon $c="#4f67dc"><Plus size={24} strokeWidth={2} /></CardIcon><div><CardTitle>Satır Ekle</CardTitle><CardSub>Yeni yevmiye kaydı</CardSub></div></ActionCard>
                    <ActionCard><CardIcon $c="#22a06b"><FileText size={22} /></CardIcon><div><CardTitle>Yevmiye Fişi</CardTitle><CardSub>Yevmiye fişleri.</CardSub></div></ActionCard>
                    <ActionCard><CardIcon $c="#e59a2c"><FileText size={22} strokeWidth={1.75} /></CardIcon><div><CardTitle>Mizan</CardTitle><CardSub>Hesap mizan raporu</CardSub></div></ActionCard>
                    <ActionCard><CardIcon $c="#d92d3a"><CreditCard size={24} strokeWidth={2} /></CardIcon><div><CardTitle>Bilanço</CardTitle><CardSub>Mali durum tablosu</CardSub></div></ActionCard>
                  </Cards>
                  <LedgerCard>
                    <LedgerTop>
                      <LedgerTitle>Genel Muhasebe Kayıtları</LedgerTitle>
                      <BtnRow><Ghost>Filtrele</Ghost><Ghost>Dışa Aktar</Ghost></BtnRow>
                    </LedgerTop>
                    <LedgerActions>
                      <Primary><Plus size={15} strokeWidth={2} />Satır Ekle</Primary>
                      <Ghost><Plus size={16} strokeWidth={2} />Yeni Sütun</Ghost>
                    </LedgerActions>
                    <TipBox>
                      <Settings size={17} strokeWidth={1.75} />
                      <TipText>
                        <div><b>İpucu:</b> Sütun başlığındaki üç nokta menüsünden sütunları kolayca düzenleyebilirsiniz.</div>
                        <div><b>Veri Bağlama:</b> Herhangi bir sütunu diğer modüllerdeki verilere kolaylıkla bağlayabilirsiniz.</div>
                      </TipText>
                    </TipBox>
                    <TableBox>
                      <THead>
                        {columns.map(([t, w, s], i) => (
                          <THCell key={i} $w={w}><Dots>⋮</Dots>{t}{s && <SortMark />}</THCell>
                        ))}
                      </THead>
                      <TBody>
                        <TRow>
                          <TCell $w={120} /><TCell $w={200} /><TCell $w={100} /><TCell $w={120}>NaN</TCell><TCell $w={119}>NaN</TCell><TCell $w={150} />
                        </TRow>
                      </TBody>
                      <TFoot>
                        Showing 1-1 of 1 rows
                        <Pager>
                          <PagerLabel>Sayfa başına</PagerLabel>
                          <PageSelect>25<ChevronDown size={13} strokeWidth={2.5} /></PageSelect>
                          <PageBtn>İlk</PageBtn><PageBtn>Önceki</PageBtn>
                          <PageBtn $on $ml={8}>1</PageBtn>
                          <PageBtn $ml={8}>Sonraki</PageBtn><PageBtn>Son</PageBtn>
                        </Pager>
                      </TFoot>
                    </TableBox>
                  </LedgerCard>
                </Content>
                <ScrollTrack $w={16}>
                  <ScrollArrow $top={7} />
                  <ScrollThumb $top={4} $h={600} />
                </ScrollTrack>
              </ContentRow>
            </Main>
          </AppBody>
        </Page>
        <ScrollTrack $w={15}>
          <ScrollArrow $top={5} />
          <ScrollThumb $top={5} $h={882} />
          <ScrollArrow $down $top={46} />
        </ScrollTrack>
      </PageRow>
      <ContextMenu>
        {menu.map((m, i) => m === null
          ? <MenuRule key={i} />
          : <MenuItem key={i} $dim={m.dim} $tall={m.qr}>
              {m.qr && <QrSlot><QrIcon /></QrSlot>}
              {m.t}{m.s && <span>{m.s}</span>}
            </MenuItem>)}
      </ContextMenu>
    </Browser>
    <Taskbar $bg="linear-gradient(90deg, #bfa865 0%, #bba05e 40%, #bd9358 100%)">
      <StartBtn><WinLogo /></StartBtn>
      <SearchBox>
        <Search size={18} strokeWidth={1.3} transform="scale(-1,1)" />Type here to search
        <Spark><SearchStars /></Spark>
      </SearchBox>
      <Slot><TaskView /></Slot>
      {leftTasks.map(k => <Slot key={k} $run={runningTasks.has(k)} $active={k === "brave"}><AppIcon k={k} /></Slot>)}
      <Tray>
        <TrayIcon><ChevronUp size={16} strokeWidth={1.5} /></TrayIcon>
        <TrayIcon><FileText size={16} strokeWidth={1.3} /></TrayIcon>
        <TrayIcon><LayoutGrid size={15} strokeWidth={1.3} /></TrayIcon>
        <TrayIcon><SpeakerIco /></TrayIcon>
        <TrayLang>TUR</TrayLang>
        <Clock>11:09 AM<br />8/20/2025</Clock>
        <Notify><Menu size={18} /><NotifyBadge>2</NotifyBadge></Notify>
        <EdgeLine />
      </Tray>
    </Taskbar>
  </Screen>
);

const RightScreen = () => (
  <Screen>
    <Desktop>
      <DeskIcon $x={152} $y={112}><BigFolder />New folder<br />(2)</DeskIcon>
      <DeskIcon $x={152} $y={211}><BigDoc />gorkemftp</DeskIcon>

      {/* Outlook */}
      <Win $x={173} $y={409} $w={1438} $h={631} $z={1}>
        <OlWrap>
          <OlMain>
            <OlRail>
              <RailBtn $h={44}><AppIcon k="outlook" /></RailBtn>
              <RailBar />
              <RailBtn $on $h={50} $mt={2}><Mail size={20} strokeWidth={1.3} /></RailBtn>
              <RailBtn $h={48}><Calendar size={20} strokeWidth={1.3} /></RailBtn>
              <RailBtn $h={48}><Users size={20} strokeWidth={1.3} /></RailBtn>
              <RailBtn $h={48}><LayoutGrid size={20} strokeWidth={1.3} /></RailBtn>
            </OlRail>
            <OlPanes>
              <OlFolders>
                <FolderHead><ChevronDown size={14} />Favorites</FolderHead>
                <FolderSel>Gelen Kutusu</FolderSel>
                <FolderRule />
                <FolderHead $mt={13}><ChevronDown size={14} />haluk.celebi@gorkemltd.com</FolderHead>
                <FolderItem>Gelen Kutusu<FolderCount>20</FolderCount></FolderItem>
                <FolderItem>Giden Kutusu</FolderItem>
                <FolderItem><FolderCaret><ChevronRight size={12} /></FolderCaret>Inbox<FolderCount>20</FolderCount></FolderItem>
                <FolderItem>RSS Akışları (Yalnızca bu bilgisayar)</FolderItem>
                <FolderItem>Taslaklar (Yalnızca bu bilgisayar)</FolderItem>
                <FolderItem>Search Folders</FolderItem>
              </OlFolders>
              <MailPane>
                <MailRow $h={72}>
                  <MailFrom>utax@gorkemltd.com</MailFrom><MailClip><Paperclip size={15} /></MailClip>
                  <span /><MailDate>Sat 8/16</MailDate>
                  <MailPrev>-------------------</MailPrev>
                </MailRow>
                <MailRow $sel $h={73}>
                  <MailFrom>Celal Sancaktar</MailFrom><MailClip><Paperclip size={15} /></MailClip>
                  <MailSubj>PROJELER ÖDEME PLANLARI</MailSubj><MailDate>Sat 8/16</MailDate>
                  <MailPrev>Celal SANCAKTAR &nbsp;Civil Eng.</MailPrev>
                </MailRow>
                <MailRow $bar $h={72}>
                  <MailFrom>utax@gorkemltd.com</MailFrom><MailClip><Paperclip size={15} /></MailClip>
                  <span /><MailDate $blue>Wed 8/13</MailDate>
                </MailRow>
              </MailPane>
              <OlGap />
              <Reading>
                <SigBold>Civil Eng. M.Sc.</SigBold>
                <SigBold>General Manager</SigBold>
                <SigBold>Gorkem Construction Ind. Trd. Ltd.</SigBold>
                <SigLine $top={25}>✉ Aşağı Dikmen Mahallesi 576. Sok No:10 Çankaya-ANKARA TÜRKİYE</SigLine>
                <SigLine>☎ (+90 312) 491 81 81</SigLine>
                <SigLine>🖷 (+90 312) 492 07 09</SigLine>
                <SigLine><Globe size={14} /><SigLink>www.gorkemltd.com</SigLink></SigLine>
              </Reading>
              <OlEdge />
            </OlPanes>
          </OlMain>
          <OlTools><RotateCw size={18} strokeWidth={1.2} /><Undo2 size={18} strokeWidth={1.2} /><ChevronDown size={11} /></OlTools>
          <OlMenu><span>File</span><span>H</span></OlMenu>
          <OlOpen><FolderOpen size={18} strokeWidth={1.3} />Open</OlOpen>
        </OlWrap>
      </Win>

      {/* archive window */}
      <Win $x={472} $y={109} $w={1424} $h={750} $z={2}>
        <ArTitle>
          <ExControl><Minus size={13} strokeWidth={1.2} /></ExControl>
          <ExControl><Square size={12} strokeWidth={1.2} /></ExControl>
          <ExControl><X size={16} strokeWidth={1} /></ExControl>
        </ArTitle>
        <ArSpace />
        <ArCombo><ChevronDown size={12} /></ArCombo>
        <ArBody>
          <ArLeft />
          <ArRight>
            <ArHead>CRC32</ArHead>
            <ArRow />
          </ArRight>
        </ArBody>
        <ArStatus>
          <ArIcons>
            <svg width="15" height="12" viewBox="0 0 15 12"><rect width="15" height="12" rx="2" fill="#555" /><rect x="2" y="2" width="11" height="5" fill="#8ab" /></svg>
            <svg width="15" height="14" viewBox="0 0 15 14"><circle cx="9" cy="7" r="5" fill="#bbb" stroke="#555" /><circle cx="9" cy="7" r="2" fill="#fff" /><path d="M0 5h5v4H0z" fill="#777" /></svg>
          </ArIcons>
          <ArStat $w={691}>Seçili 1 klasör, 3,232,776 bayt</ArStat>
          <ArStat $w={600}>Toplam 1 klasör, 3,232,776 bayt</ArStat>
        </ArStatus>
      </Win>

      {/* explorer */}
      <Win $x={298} $y={29} $w={1123} $h={622} $z={3}>
        <ExTitle>
          <FolderIco s={15} /><ExSep /><DocIco lines={false} tag="#f4f4f4" /><FolderIco s={15} /><ChevronDown size={10} color="#222" /><ExSep />
          <ExName>WebHello</ExName>
          <ExControls>
            <ExControl><Minus size={13} strokeWidth={1.2} /></ExControl>
            <ExControl><Square size={12} strokeWidth={1.2} /></ExControl>
            <ExControl><X size={16} strokeWidth={1} /></ExControl>
          </ExControls>
        </ExTitle>
        <Ribbon>
          <FileTab>File</FileTab>
          <RibbonTab>Home</RibbonTab>
          <RibbonTab $w={46}>Share</RibbonTab>
          <RibbonTab $w={60}>View</RibbonTab>
          <RibbonEnd><ChevronDown size={12} /><Help>?</Help></RibbonEnd>
        </Ribbon>
        <AddrRow>
          <AddrNav>
            <ArrowLeft size={15} strokeWidth={1.6} color="#666" />
            <ArrowRight size={15} strokeWidth={1.6} color="#bbb" />
            <ChevronDown size={9} color="#666" />
            <ArrowUp size={15} strokeWidth={1.6} color="#666" />
          </AddrNav>
          <AddrField>
            <FolderIco s={15} /><Crumb><ChevronRight size={10} /></Crumb>This PC<Crumb><ChevronRight size={10} /></Crumb>Desktop<Crumb><ChevronRight size={10} /></Crumb>WebHello
            <AddrEnd><ChevronDown size={12} strokeWidth={2} /><RefreshCw size={12} /></AddrEnd>
          </AddrField>
          <SearchField>Search WebHello<Search size={13} transform="scale(-1,1)" /></SearchField>
        </AddrRow>
        <ExBody>
          <ExNav>
            {explorerNav.map((n, i) => (
              <ExNavItem key={i} $top={n.top} $sel={n.sel} $gap={n.gap}>
                <NavIco k={n.k} />{n.t}{n.pin && <PinBox><Pin size={11} fill="#aaa" /></PinBox>}
              </ExNavItem>
            ))}
          </ExNav>
          <ExTrack>
            <ChevronUp size={12} strokeWidth={2} />
            <ExThumb />
            <ChevronDown size={12} strokeWidth={2} />
          </ExTrack>
          <ExList>
            <ListHead>
              <ListHCell>Name<SortCaret><ChevronUp size={10} /></SortCaret></ListHCell>
              <ListHCell $pl={8}>Date modified</ListHCell>
              <ListHCell $pl={6}>Type</ListHCell>
              <ListHCell $pl={6}>Size</ListHCell>
            </ListHead>
            {files.map(f => (
              <ListRow key={f[0]}>
                <NameCell><RowIco k={f[1]} />{f[0]}</NameCell>
                <div>{f[2]}</div>
                <div>{f[3]}</div>
                <SizeCell>{f[4]}</SizeCell>
              </ListRow>
            ))}
          </ExList>
        </ExBody>
        <ExStatus>
          <StatusPart>17 items</StatusPart>
          <StatusPart>17 items selected</StatusPart>
          <ViewBtns>
            <ViewBtn $on><Menu size={14} color="#667" /></ViewBtn>
            <ViewBtn><NavIco k="pic" /></ViewBtn>
          </ViewBtns>
        </ExStatus>
      </Win>
    </Desktop>
    <Taskbar $bg="linear-gradient(90deg, #bfa865 0%, #d8ab66 7%, #e5b264 14%, #e5b264 84%, #bd9358 89%, #bd9358 100%)">
      <StartBtn><WinLogo /></StartBtn>
      <Slot><Search size={24} color="#fff" strokeWidth={1.5} transform="scale(-1,1)" /></Slot>
      <Slot><TaskView /></Slot>
      {leftTasks.map(k => <Slot key={k} $run={runningTasks.has(k)} $active={k === "brave"}><AppIcon k={k} /></Slot>)}
      <Tray>
        <Clock $mr={2}>11:09 AM<br />8/20/2025</Clock>
      </Tray>
    </Taskbar>
  </Screen>
);

export default function App() {
  return (
    <>
      <Global />
      <Root>
        <LeftScreen />
        <RightScreen />
      </Root>
    </>
  );
}
